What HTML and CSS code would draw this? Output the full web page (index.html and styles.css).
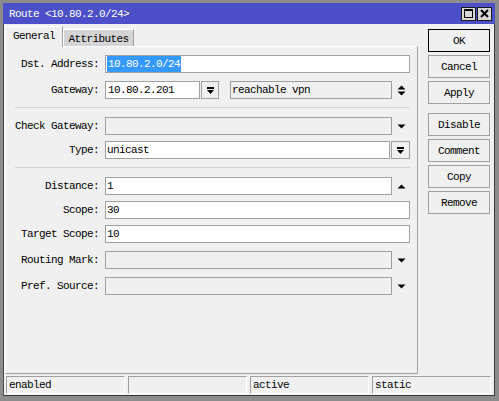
FILE: index.html
```html
<!DOCTYPE html>
<html>
<head>
<meta charset="utf-8">
<title>Route</title>
<link rel="stylesheet" href="styles.css">
</head>
<body>
<div class="win">
  <div class="titlebar">
    <span class="title">Route &lt;10.80.2.0/24&gt;</span>
    <div class="tbtns">
      <span class="tbtn">
        <svg width="9" height="9" viewBox="0 0 9 9"><rect x="0.5" y="0.5" width="8" height="8" fill="none" stroke="#000"/><rect x="0" y="0" width="9" height="2"/></svg>
      </span>
      <span class="tbtn">
        <svg width="9" height="9" viewBox="0 0 9 9"><path d="M1 1l7 7M8 1l-7 7" stroke="#000" stroke-width="2"/></svg>
      </span>
    </div>
  </div>

  <div class="main">
    <div class="left">
      <div class="tabs">
        <div class="tab active">General</div>
        <div class="tab other">Attributes</div>
      </div>
      <div class="panel">
        <div class="row">
          <span class="label">Dst. Address:</span>
          <div class="field grow"><span class="sel">10.80.2.0/24</span></div>
        </div>
        <div class="row gap8">
          <span class="label">Gateway:</span>
          <div class="field gw">10.80.2.201</div>
          <div class="ddbtn">
            <svg width="9" height="9" viewBox="0 0 9 9"><rect x="1" y="1" width="7" height="2"/><path d="M1 4h7L4.5 8z"/></svg>
          </div>
          <div class="field ro grow reach">reachable vpn</div>
          <div class="slot">
            <svg width="9" height="13" viewBox="0 0 9 13"><path d="M0.5 5.5h8L4.5 1.5z M0.5 7.5h8L4.5 11.5z"/></svg>
          </div>
        </div>
        <div class="sep"></div>
        <div class="row">
          <span class="label">Check Gateway:</span>
          <div class="field ro grow"></div>
          <div class="slot">
            <svg width="9" height="5" viewBox="0 0 9 5"><path d="M0.5 0.5h8L4.5 4.5z"/></svg>
          </div>
        </div>
        <div class="row gap6">
          <span class="label">Type:</span>
          <div class="field grow">unicast</div>
          <div class="ddbtn wide">
            <svg width="9" height="9" viewBox="0 0 9 9"><rect x="1" y="1" width="7" height="2"/><path d="M1 4h7L4.5 8z"/></svg>
          </div>
        </div>
        <div class="sep"></div>
        <div class="row">
          <span class="label">Distance:</span>
          <div class="field grow">1</div>
          <div class="slot">
            <svg width="9" height="5" viewBox="0 0 9 5"><path d="M0.5 4.5h8L4.5 0.5z"/></svg>
          </div>
        </div>
        <div class="row gap6">
          <span class="label">Scope:</span>
          <div class="field grow">30</div>
        </div>
        <div class="row gap6">
          <span class="label">Target Scope:</span>
          <div class="field grow">10</div>
        </div>
        <div class="row gap8">
          <span class="label">Routing Mark:</span>
          <div class="field ro grow"></div>
          <div class="slot">
            <svg width="9" height="5" viewBox="0 0 9 5"><path d="M0.5 0.5h8L4.5 4.5z"/></svg>
          </div>
        </div>
        <div class="row gap8">
          <span class="label">Pref. Source:</span>
          <div class="field ro grow"></div>
          <div class="slot">
            <svg width="9" height="5" viewBox="0 0 9 5"><path d="M0.5 0.5h8L4.5 4.5z"/></svg>
          </div>
        </div>
      </div>
    </div>

    <div class="btns">
      <div class="btn def">OK</div>
      <div class="btn">Cancel</div>
      <div class="btn">Apply</div>
      <div class="btn sp">Disable</div>
      <div class="btn">Comment</div>
      <div class="btn">Copy</div>
      <div class="btn">Remove</div>
    </div>
  </div>

  <div class="status">
    <div class="cell">enabled</div>
    <div class="cell"></div>
    <div class="cell">active</div>
    <div class="cell">static</div>
  </div>
</div>
</body>
</html>
```

FILE: styles.css
```css
* {
  box-sizing: border-box;
}

html,
body {
  margin: 0;
  padding: 0;
  background: #8d8d8d;
}

body {
  font-family: "Liberation Mono", "DejaVu Sans Mono", monospace;
  font-size: 11px;
  letter-spacing: -0.6px;
  color: #000;
}

/* window frame */
.win {
  width: 499px;
  height: 401px;
  border-style: solid;
  border-color: #8d8d8d;
  border-width: 3px 4px 5px 3px;
  background: #f0f0f0;
  display: flex;
  flex-direction: column;
  box-shadow: inset 1px 0 0 #4a4a4a, inset -1px -1px 0 #3a3a3a;
}

.titlebar {
  flex: none;
  height: 21px;
  background: #4b50c8;
  color: #fff;
  display: flex;
  align-items: center;
  justify-content: space-between;
  padding: 0 3px 0 6px;
}

.tbtns {
  display: flex;
  gap: 1px;
}

.tbtn {
  width: 15px;
  height: 14px;
  background: #d8d8d8;
  border: 1px solid #1a1a1a;
  display: flex;
  align-items: center;
  justify-content: center;
}

/* tabs + form + button column */
.main {
  flex: none;
  height: 350px;
  display: flex;
  padding-top: 2px;
}

.left {
  width: 413px;
  margin-left: 2px;
  display: flex;
  flex-direction: column;
}

.tabs {
  height: 20px;
  display: flex;
  align-items: flex-end;
}

.tab {
  display: flex;
  align-items: center;
  justify-content: center;
  border-top: 1px solid #fff;
  border-left: 1px solid #fff;
  border-right: 1px solid #a0a0a0;
}

.tab.active {
  width: 58px;
  height: 21px;
  margin-bottom: -1px;
  padding-bottom: 2px;
  background: #f0f0f0;
  position: relative;
  z-index: 1;
}

.tab.other {
  width: 71px;
  height: 17px;
  background: #d4d4d4;
  padding-top: 1px;
}

.panel {
  height: 328px;
  border: 1px solid;
  border-color: #fff #a0a0a0 #a0a0a0 #fff;
  padding: 8px 7px 0 0;
}

.row {
  display: flex;
  align-items: center;
  height: 18px;
}

.row.gap6 {
  margin-top: 6px;
}

.row.gap8 {
  margin-top: 8px;
}

.label {
  width: 93px;
  margin-right: 6px;
  text-align: right;
  white-space: nowrap;
}

.field {
  height: 18px;
  border: 1px solid #a0a0a0;
  background: #fff;
  padding-left: 1px;
  display: flex;
  align-items: center;
  white-space: nowrap;
}

.field.ro {
  background: #f0f0f0;
}

.grow {
  flex: 1;
}

.field.gw {
  width: 95px;
  padding-left: 2px;
}

.field.reach {
  margin-left: 11px;
}

.sel {
  display: block;
  height: 16px;
  line-height: 16px;
  padding: 0 1px 0 1px;
  background: #3399ff;
  color: #fff;
}

.ddbtn {
  width: 18px;
  height: 18px;
  margin-left: 1px;
  border: 1px solid #a0a0a0;
  background: #f0f0f0;
  display: flex;
  align-items: center;
  justify-content: center;
}

.ddbtn.wide {
  width: 19px;
  margin-left: 1px;
}

.slot {
  width: 18px;
  height: 18px;
  display: flex;
  align-items: center;
  justify-content: center;
}

.sep {
  height: 1px;
  background: #d4d4d4;
  margin: 8px 0 9px 9px;
}

/* dialog buttons */
.btns {
  width: 62px;
  margin-left: 10px;
  padding-top: 3px;
  display: flex;
  flex-direction: column;
  gap: 3px;
}

.btn {
  height: 23px;
  border: 1px solid #a0a0a0;
  background: #f0f0f0;
  display: flex;
  align-items: center;
  justify-content: center;
}

.btn.def {
  border-color: #000;
}

.btn.sp {
  margin-top: 6px;
}

/* status bar */
.status {
  flex: none;
  height: 18px;
  margin-top: 2px;
  padding: 0 4px 0 3px;
  display: flex;
  gap: 3px;
}

.cell {
  flex: 1;
  border: 1px solid;
  border-color: #a0a0a0 #fff #fff #a0a0a0;
  padding-left: 2px;
  display: flex;
  align-items: center;
  white-space: nowrap;
}
```
